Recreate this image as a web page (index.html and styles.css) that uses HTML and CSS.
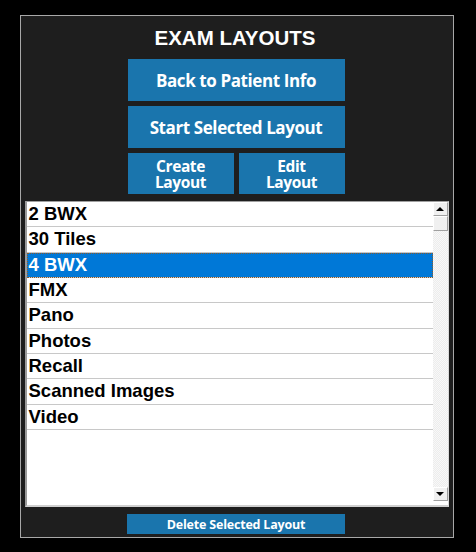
FILE: index.html
```html
<!DOCTYPE html>
<html lang="en">
<head>
  <meta charset="UTF-8" />
  <title>Exam Layouts</title>
  <link rel="stylesheet" href="styles.css">
</head>
<body>
  <div class="panel">
    <h1 class="title">EXAM LAYOUTS</h1>
    <div class="actions">
      <button class="btn btn-big">Back to Patient Info</button>
      <button class="btn btn-big">Start Selected Layout</button>
      <div class="btn-row">
        <button class="btn btn-small">Create<br>Layout</button>
        <button class="btn btn-small">Edit<br>Layout</button>
      </div>
    </div>

    <div class="listbox">
      <ul class="items">
        <li>2 BWX</li>
        <li>30 Tiles</li>
        <li class="selected">4 BWX</li>
        <li>FMX</li>
        <li>Pano</li>
        <li>Photos</li>
        <li>Recall</li>
        <li>Scanned Images</li>
        <li>Video</li>
      </ul>
      <div class="scrollbar">
        <div class="sb-btn"><span class="arrow-up"></span></div>
        <div class="sb-thumb"></div>
        <div class="sb-track"></div>
        <div class="sb-btn"><span class="arrow-down"></span></div>
      </div>
    </div>

    <button class="btn btn-delete">Delete Selected Layout</button>
  </div>
</body>
</html>
```

FILE: styles.css
```css
body {
  margin: 0;
  background-color: #000;
  font-family: "Liberation Sans", Arial, sans-serif;
}
.panel {
  box-sizing: border-box;
  width: 434px;
  height: 523px;
  margin: 15px 0 0 20px;
  border: 1px solid #a8a8a8;
  background-color: #1e1e1e;
  padding: 0 5px 0 3px;
  display: flex;
  flex-direction: column;
  align-items: center;
}
.title {
  margin: 10px 0 0 -2px;
  font-size: 20.5px;
  line-height: 24px;
  font-weight: bold;
  color: #fff;
}
.actions {
  margin-top: 9px;
  width: 217px;
  display: flex;
  flex-direction: column;
  gap: 5px;
}
.btn {
  font-family: "Open Sans", sans-serif;
  font-weight: bold;
  color: #fff;
  background-color: #1a75ad;
  border: none;
  padding: 0;
  cursor: pointer;
}
.btn-big {
  height: 42px;
  font-size: 17px;
  letter-spacing: -0.4px;
}
.btn-row {
  display: flex;
  gap: 5px;
}
.btn-small {
  flex: 1;
  height: 41px;
  padding-top: 1px;
  font-size: 15.5px;
  line-height: 16px;
  letter-spacing: -0.4px;
}
.listbox {
  box-sizing: border-box;
  margin-top: 7px;
  margin-left: 1px;
  width: 424px;
  height: 306px;
  display: flex;
  background-color: #fff;
  border-top: 1px solid #a0a0a0;
  border-left: 2px solid #9a9a9a;
  border-right: 1px solid #d8d8d8;
  border-bottom: 2px solid #d0d0d0;
}
.items {
  flex: 1;
  list-style: none;
  margin: 0;
  padding: 0;
}
.items li {
  box-sizing: border-box;
  height: 25.33px;
  line-height: 24.33px;
  padding-left: 2px;
  border-bottom: 1px solid #c8c8c8;
  font-size: 18.5px;
  font-weight: bold;
  color: #000;
}
.items li.selected {
  background-color: #0078d7;
  color: #fff;
  outline: 1px dotted #8a5a2a;
  outline-offset: -1px;
}
.scrollbar {
  width: 15px;
  display: flex;
  flex-direction: column;
  margin-bottom: 4px;
  background-color: #f0f0f0;
  background-image: repeating-conic-gradient(#f8f8f8 0 25%, #ececec 0 50%);
  background-size: 2px 2px;
}
.sb-btn, .sb-thumb {
  box-sizing: border-box;
  height: 14px;
  background-color: #f0f0f0;
  border: 1px solid #fff;
  border-right-color: #a0a0a0;
  border-bottom-color: #a0a0a0;
  display: flex;
  align-items: center;
  justify-content: center;
}
.sb-thumb {
  height: 15px;
}
.sb-track {
  flex: 1;
}
.arrow-up, .arrow-down {
  width: 0;
  height: 0;
  border-left: 4px solid transparent;
  border-right: 4px solid transparent;
}
.arrow-up {
  border-bottom: 4px solid #000;
}
.arrow-down {
  border-top: 4px solid #000;
}
.btn-delete {
  margin-top: 7px;
  width: 218px;
  height: 20px;
  font-size: 12.5px;
  letter-spacing: -0.2px;
}
```
